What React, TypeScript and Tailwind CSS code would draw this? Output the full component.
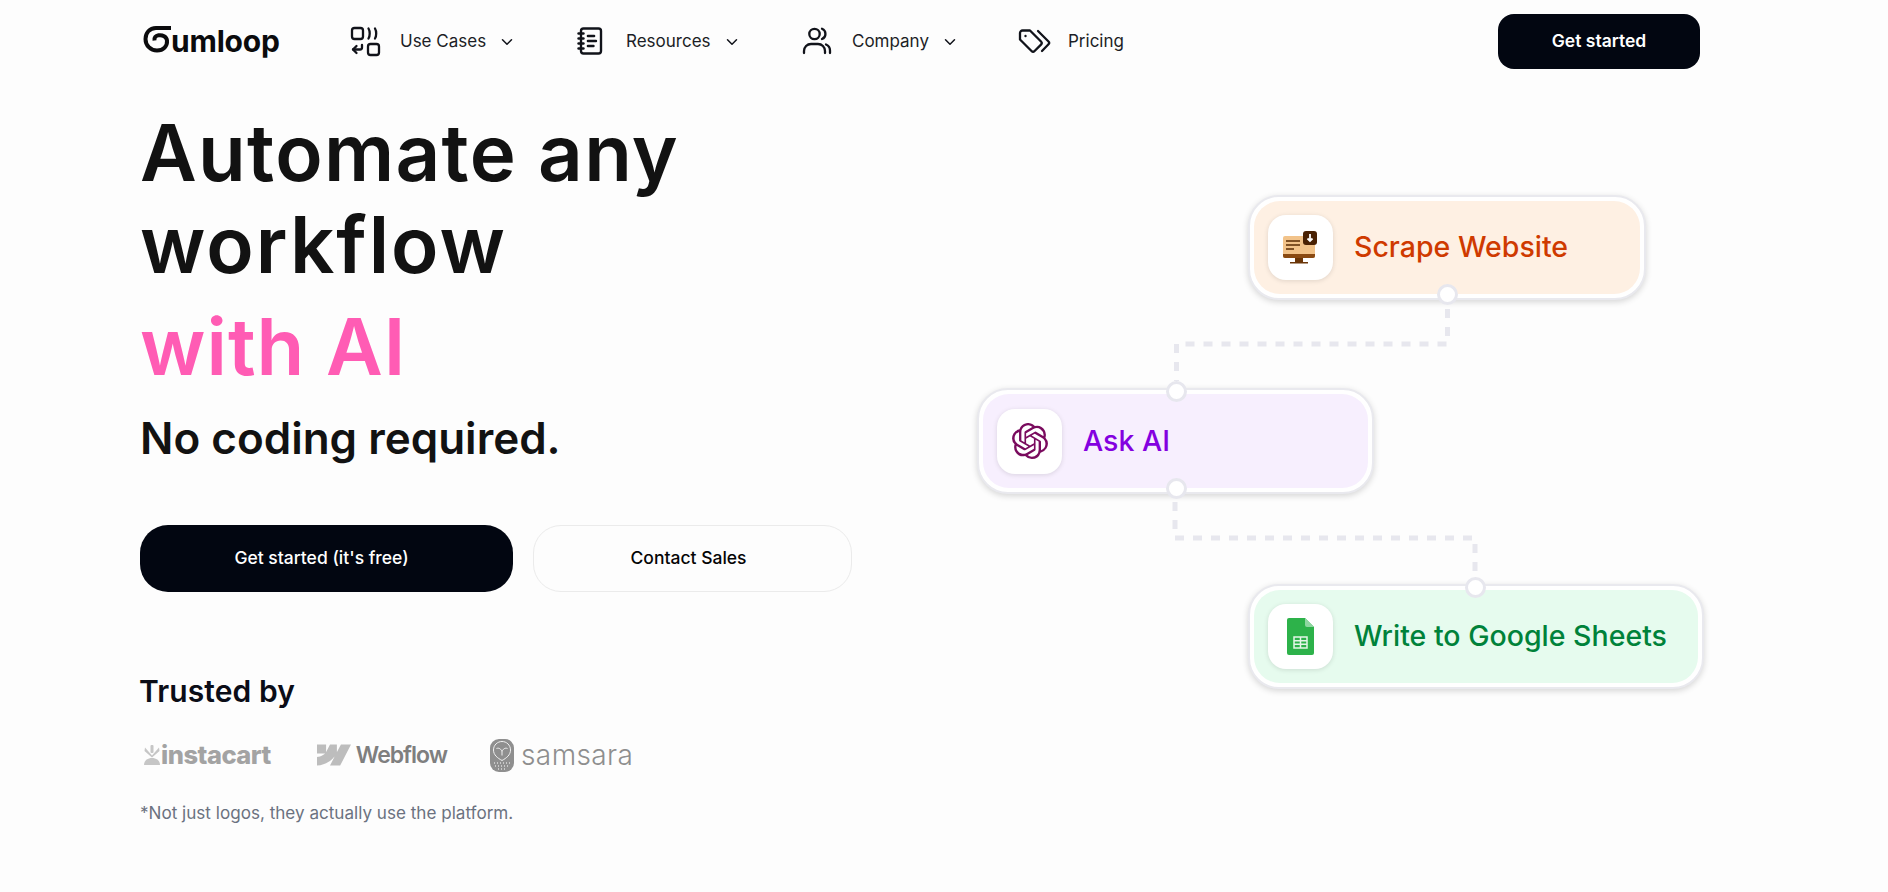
import { ChevronDown, NotebookText } from "lucide-react";
import { SiOpenai, SiWebflow } from "react-icons/si";

const UseCasesIcon = () => (
    <svg width="31" height="31" viewBox="0 0 31 31" fill="none" stroke="#11131a" strokeWidth="2.3" strokeLinecap="round" strokeLinejoin="round">
        <rect x="2" y="2" width="11" height="11" rx="2.5" />
        <path d="M18.500 2.500c1.600 2.600 1.600 7.400 0 10" />
        <path d="M25 2.500c1.600 2.600 1.600 7.400 0 10" />
        <rect x="18" y="18" width="11" height="11" rx="2.500" />
        <path d="M12 19v2.500a2 2 0 0 1-2 2H3" />
        <path d="M6.500 20 3 23.500 6.500 27" />
    </svg>
);

const CompanyIcon = () => (
    <svg width="30" height="30" viewBox="0 0 30 30" fill="none" stroke="#11131a" strokeWidth="2.3" strokeLinecap="round">
        <circle cx="12.500" cy="8" r="5.200" />
        <path d="M20 2.800a5.500 5.500 0 0 1 0 10.200" />
        <path d="M2 27v-2a7 7 0 0 1 7-7h7a7 7 0 0 1 7 7v2" />
        <path d="M24 18.500c2.500 1 4 3.400 4 6V27" />
    </svg>
);

const PricingIcon = () => (
    <svg width="34" height="24" viewBox="0 0 34 24" fill="none" stroke="#11131a" strokeWidth="2.300" strokeLinecap="round" strokeLinejoin="round">
        <path d="M2 4a2.500 2.500 0 0 1 2.500-2.500H12L23 12.500a2.200 2.200 0 0 1 0 3.100l-6.400 6.400a2.200 2.200 0 0 1-3.100 0L2 10.500z" />
        <circle cx="7.500" cy="7" r="1.200" fill="#11131a" stroke="none" />
        <path d="M20 2 30.500 12.500a2 2 0 0 1 0 2.800L24 22" />
    </svg>
);

const NavItem = ({ icon, label, hasMenu = true, width }: { icon: React.ReactNode; label: string; hasMenu?: boolean; width: string }) => (
    <div className={`flex items-center ${width}`}>
        <div className="flex w-[50px] shrink-0 items-center">{icon}</div>
        <span className="mt-[1px] text-[17px] text-[#1c1e26]">{label}</span>
        {hasMenu && <ChevronDown className="mt-[1px] ml-[12px] size-[18px] text-[#11131a]" strokeWidth={2} />}
    </div>
);

const GumloopLogo = () => (
    <div className="flex w-[207px] shrink-0 items-center">
        <svg width="28" height="28" viewBox="0 0 28 28" fill="none" stroke="#0b0b0d" strokeWidth="4" className="-mt-[5px] shrink-0">
            <path d="M28 3H13C6.500 3 2.500 8 2.500 14c0 6.500 5 11.500 11.500 11.500 6.500 0 10.500-4.500 10-10-.4-4-4.500-5.800-8.500-5.200-3 .5-4.500 2.500-4 5.200" />
        </svg>
        <span className="text-[30px] leading-none font-bold tracking-[-0.2px] text-[#0b0b0d]">umloop</span>
    </div>
);

const MonitorIcon = () => (
    <svg width="36" height="34" viewBox="0 0 36 34">
        <rect x="0" y="5" width="32" height="22" rx="2" fill="#f2c38a" />
        <path d="M0 23h32v2a2 2 0 0 1-2 2H2a2 2 0 0 1-2-2z" fill="#8a4a12" />
        <rect x="12" y="27" width="8" height="4" fill="#6b3608" />
        <rect x="7" y="31" width="18" height="1.500" fill="#6b3608" />
        <path d="M3 10h14M3 14h14M3 18h8" stroke="#5a2c05" strokeWidth="1.500" />
        <rect x="20" y="0" width="14" height="14" rx="3" fill="#4a2204" />
        <path d="M27 3v7M24.500 7.500 27 10l2.500-2.500" stroke="#fff" strokeWidth="1.800" fill="none" />
    </svg>
);

const SheetsIcon = () => (
    <svg width="27" height="37" viewBox="0 0 27 37">
        <path d="M2 0h16l9 9v26a2 2 0 0 1-2 2H2a2 2 0 0 1-2-2V2a2 2 0 0 1 2-2z" fill="#2db24a" />
        <path d="M18 0l9 9h-7a2 2 0 0 1-2-2z" fill="#8ed6a0" />
        <path d="M7 19h13v11H7zM7 22.700h13M7 26.300h13M13.500 19v11" fill="none" stroke="#e4f6e8" strokeWidth="1.500" />
    </svg>
);

const InstacartMark = () => (
    <svg width="16" height="20" viewBox="0 0 16 20" fill="#c6c6c6">
        <rect x="6.500" y="0" width="3" height="8" rx="1" />
        <path d="M1 2.500 8 10.500 15 2.500 15.500 6 8 12.500.5 6z" />
        <path d="M0 20c0-4.500 3.500-7 8-7s8 2.500 8 7z" />
    </svg>
);

const SamsaraMark = () => (
    <svg width="24" height="33" viewBox="0 0 24 33">
        <rect x="0" y="0" width="24" height="33" rx="9" fill="#8f8f8f" />
        <path d="M3.500 11c0-5 4-8.500 8.500-8.500s8.500 3.500 8.500 8.500c0 5-4 8-8.500 10.500C7.500 19 3.500 16 3.500 11z" fill="none" stroke="#f1f1f1" strokeWidth="1" />
        <path d="M6.500 9.500c2.500-1 4.500.5 5.500 3 1-2.500 3-4 5.500-3M12 12.500v4" fill="none" stroke="#f1f1f1" strokeWidth="1" />
        <path d="M4 24h16M5 27h14M8 30h8" stroke="#dcdcdc" strokeWidth="1.300" strokeDasharray="1 2" />
    </svg>
);

const Handle = ({ className }: { className: string }) => (
    <div className={`absolute size-[21px] rounded-full border-[3px] border-[#e7e7ee] bg-white ${className}`} />
);

const FlowNode = ({ className, fill, icon, label, labelColor }: { className: string; fill: string; icon: React.ReactNode; label: string; labelColor: string }) => (
    <div className={`absolute rounded-[31px] border-2 border-[#e9e9ee] bg-white p-[4px] shadow-[0_2px_6px_rgba(0,0,0,0.16)] ${className}`}>
        <div className={`flex h-full items-center rounded-[26px] pl-[14px] ${fill}`}>
            <div className="flex size-[65px] shrink-0 items-center justify-center rounded-[18px] bg-white shadow-[0_1px_5px_rgba(0,0,0,0.12)]">{icon}</div>
            <span className={`ml-[21px] text-[28.500px] font-medium whitespace-nowrap ${labelColor}`}>{label}</span>
        </div>
    </div>
);

export default function App() {
    return (
        <div className="h-[892px] overflow-hidden bg-[#fdfdfd] font-[Inter,sans-serif]">
            {/* Nav */}
            <nav className="flex h-[82px] items-center pr-[188px] pl-[143px]">
                <GumloopLogo />
                <NavItem width="w-[226px]" icon={<UseCasesIcon />} label="Use Cases" />
                <NavItem width="w-[226px]" icon={<NotebookText className="size-[30px] text-[#11131a]" strokeWidth={1.9} />} label="Resources" />
                <NavItem width="w-[216px]" icon={<CompanyIcon />} label="Company" />
                <NavItem width="w-[200px]" icon={<PricingIcon />} label="Pricing" hasMenu={false} />
                <button className="ml-auto h-[55px] w-[202px] rounded-[16px] bg-[#020611] pt-[1px] text-[17.500px] font-semibold text-white">Get started</button>
            </nav>

            <main className="flex">
                {/* Hero copy */}
                <div className="w-[940px] shrink-0 pl-[140px]">
                    <h1 className="mt-[25px] text-[78px] leading-[92px] font-semibold tracking-[1.3px] text-[#121212]">
                        Automate any
                        <br />
                        <span className="tracking-[2px]">workflow</span>
                    </h1>
                    <p className="mt-[10px] text-[78px] leading-[92px] font-semibold tracking-[1px] text-[#ff5cb4]">with AI</p>
                    <p className="mt-[17px] text-[44px] leading-[56px] font-semibold text-[#121212]">No coding required.</p>
                    <div className="mt-[59px] flex gap-[20px]">
                        <button className="h-[67px] w-[373px] rounded-[28px] bg-[#020611] pr-[10px] text-[17.500px] font-medium text-white">Get started (it's free)</button>
                        <button className="h-[67px] w-[319px] rounded-[28px] border border-[#ebebeb] pr-[8px] text-[17.500px] font-medium text-[#050505]">Contact Sales</button>
                    </div>
                    <h2 className="mt-[80px] -ml-[1px] text-[30px] leading-[38px] font-semibold tracking-[0.1px] text-[#0b0d17]">Trusted by</h2>
                    <div className="mt-[27px] flex h-[36px] items-center">
                        <div className="ml-[4px] flex">
                            <InstacartMark />
                        </div>
                        <span className="ml-[1px] text-[25.500px] leading-none font-extrabold tracking-[-0.5px] text-[#a3a3a3]">instacart</span>
                        <SiWebflow className="ml-[46px] size-[34px] text-[#bdbdbd]" />
                        <span className="ml-[5px] text-[23px] leading-none font-semibold tracking-[-1px] text-[#7f7f7f]">Webflow</span>
                        <div className="ml-[43px] flex">
                            <SamsaraMark />
                        </div>
                        <span className="ml-[7px] text-[28px] leading-none font-light tracking-[0.4px] text-[#8e8e8e]">samsara</span>
                    </div>
                    <p className="mt-[27px] text-[17.100px] text-[#6b7280]">*Not just logos, they actually use the platform.</p>
                </div>

                {/* Flow canvas */}
                <div className="relative h-[810px] flex-1">
                    <svg className="absolute inset-0 size-full" fill="none" stroke="#e7e7ee" strokeWidth="5" strokeDasharray="9 9">
                        <path d="M507.500 227V262H236.500V299" />
                        <path d="M235 420V456H535V493" />
                    </svg>
                    <FlowNode
                        className="top-[113px] left-[308px] h-[105px] w-[398px]"
                        fill="bg-[#fef0e3]"
                        icon={<MonitorIcon />}
                        label="Scrape Website"
                        labelColor="text-[#cf3a00]"
                    />
                    <Handle className="top-[202px] left-[497px]" />
                    <FlowNode
                        className="top-[306px] left-[37px] h-[106px] w-[397px]"
                        fill="bg-[#f7effe]"
                        icon={<SiOpenai className="size-[36px] text-[#7a0b5e]" />}
                        label="Ask AI"
                        labelColor="text-[#8400e0]"
                    />
                    <Handle className="top-[299px] left-[226px]" />
                    <Handle className="top-[396px] left-[226px]" />
                    <FlowNode
                        className="top-[502px] left-[308px] h-[105px] w-[456px]"
                        fill="bg-[#e6fbee]"
                        icon={<SheetsIcon />}
                        label="Write to Google Sheets"
                        labelColor="text-[#00823a]"
                    />
                    <Handle className="top-[495px] left-[525px]" />
                </div>
            </main>
        </div>
    );
}
